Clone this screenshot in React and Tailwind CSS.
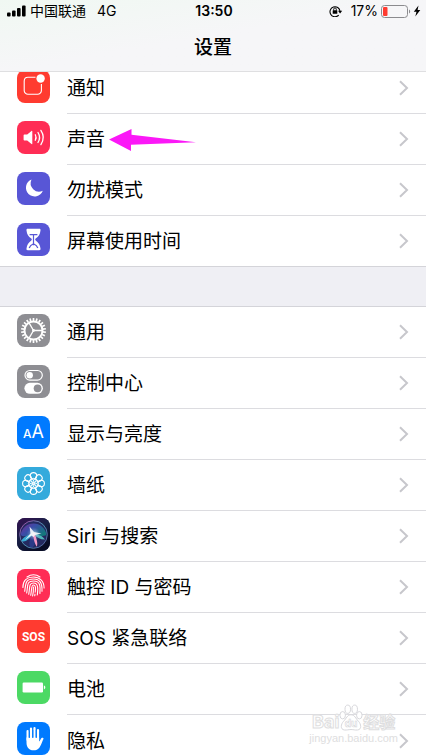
import { clsx } from "clsx";

const PETALS = [0, 45, 90, 135, 180, 225, 270, 315];
const TEETH = Array.from({ length: 22 }, (_, i) => (i * 360) / 22);

function NotificationIcon() {
  return (
    <svg viewBox="0 0 33 33" className="size-full">
      <path
        d="M18.5 7.300H11A3.800 3.800 0 0 0 7.200 11v9.500a3.800 3.800 0 0 0 3.800 3.800h9.600a3.800 3.800 0 0 0 3.800-3.800V14"
        fill="none"
        stroke="#fff"
        strokeWidth="1.1"
      />
      <circle cx="23.6" cy="8.5" r="4.2" fill="#fff" />
    </svg>
  );
}

function SoundIcon() {
  return (
    <svg viewBox="0 0 33 33" className="size-full">
      <path d="M6.600 14.200c0-.5.3-.8.8-.8h2.800l4.300-3.500c.4-.3.8-.1.800.4v12.400c0 .5-.4.7-.8.4l-4.300-3.500H7.400c-.5 0-.8-.3-.8-.8z" fill="#fff" />
      <g fill="none" stroke="#fff" strokeWidth="1.3" strokeLinecap="round">
        <path d="M18.300 13.700c1 1.800 1 3.800 0 5.600" />
        <path d="M21 11.500c2 3.200 2 6.800 0 10" />
        <path d="M23.900 9.400c3 4.500 3 9.700 0 14.200" />
      </g>
    </svg>
  );
}

function MoonIcon() {
  return (
    <svg viewBox="0 0 33 33" className="size-full">
      <path d="M14.500 7.600A8.700 8.700 0 1 0 25.800 18.700 8.400 8.400 0 0 1 14.500 7.600z" fill="#fff" />
    </svg>
  );
}

function HourglassIcon() {
  return (
    <svg viewBox="0 0 33 33" className="size-full">
      <path
        d="M10.700 5.800h11.600c1 0 1.400.7 1.200 1.600-.5 4.100-1.800 6-4.800 8.200-.7.5-.7 1.300 0 1.800 3 2.200 4.300 4.100 4.800 8.200.2.9-.2 1.600-1.200 1.600H10.700c-1 0-1.400-.7-1.200-1.600.5-4.100 1.800-6 4.800-8.200.7-.5.7-1.300 0-1.800-3-2.200-4.300-4.100-4.800-8.200-.2-.9.2-1.600 1.200-1.600z"
        fill="#fff"
      />
      <path
        d="M12.600 11.600h7.800M16.500 11.600v10.600M12.200 25c.6-2.100 2-3.200 4.300-4.200 2.300 1 3.700 2.100 4.300 4.200"
        fill="none"
        stroke="#5856d6"
        strokeWidth="1.200"
      />
    </svg>
  );
}

function GearIcon() {
  return (
    <svg viewBox="0 0 33 33" className="size-full" fill="none" stroke="#fff">
      {TEETH.map((deg) => (
        <path key={deg} d="M16.500 4v3" strokeWidth="1.700" transform={`rotate(${deg} 16.5 16.5)`} />
      ))}
      <circle cx="16.5" cy="16.5" r="9" strokeWidth="1.900" />
      <path d="M16.500 16.500H25M16.500 16.500l-4.300-7.400M16.500 16.500l-4.300 7.400" strokeWidth="1.300" />
      <circle cx="16.5" cy="16.5" r="1.400" fill="#fff" stroke="none" />
    </svg>
  );
}

function ControlIcon() {
  return (
    <svg viewBox="0 0 33 33" className="size-full">
      <rect x="8" y="5.500" width="17.300" height="9.600" rx="4.800" fill="none" stroke="#fff" strokeWidth="1.200" />
      <circle cx="12.700" cy="10.300" r="3.200" fill="#fff" />
      <rect x="7.400" y="17.800" width="18.500" height="11" rx="5.500" fill="#fff" />
      <circle cx="20.600" cy="23.300" r="3.900" fill="#8e8e93" />
    </svg>
  );
}

function DisplayIcon() {
  return (
    <span className="flex size-full items-baseline justify-center pt-1 text-white">
      <span className="text-xs leading-6 font-medium">A</span>
      <span className="text-lg leading-6">A</span>
    </span>
  );
}

function WallpaperIcon() {
  return (
    <svg viewBox="0 0 33 33" className="size-full" fill="none" stroke="#fff" strokeWidth="1.100">
      {PETALS.map((deg) => (
        <g key={deg} transform={`rotate(${deg} 16.5 16.5)`}>
          <circle cx="16.5" cy="8.800" r="3.200" />
          <circle cx="16.5" cy="13.600" r="2.300" strokeWidth=".7" />
        </g>
      ))}
    </svg>
  );
}

function SiriIcon() {
  return (
    <svg viewBox="0 0 33 33" className="size-full">
      <defs>
        <linearGradient id="siriBack" x1="0" y1="0" x2=".6" y2="1">
          <stop offset="0" stopColor="#34104f" />
          <stop offset=".5" stopColor="#192047" />
          <stop offset="1" stopColor="#080c24" />
        </linearGradient>
        <radialGradient id="siriGlow">
          <stop offset="0" stopColor="#fff" />
          <stop offset=".35" stopColor="#c5dcf5" stopOpacity=".8" />
          <stop offset="1" stopColor="#7e82d5" stopOpacity="0" />
        </radialGradient>
        <linearGradient id="siriRing" x1="0" y1="0" x2="1" y2="1">
          <stop offset="0" stopColor="#c044a8" />
          <stop offset=".5" stopColor="#4f9dbb" />
          <stop offset="1" stopColor="#5b5fa0" />
        </linearGradient>
        <linearGradient id="siriOrb" x1="0" y1="0" x2="1" y2=".6">
          <stop offset="0" stopColor="#8a2a92" />
          <stop offset=".45" stopColor="#3d4fb0" />
          <stop offset="1" stopColor="#12807f" />
        </linearGradient>
      </defs>
      <rect width="33" height="33" fill="url(#siriBack)" />
      <circle cx="16.5" cy="16.5" r="13.800" fill="#242a60" stroke="url(#siriRing)" strokeWidth=".9" />
      <path d="M3.600 17A13 13 0 0 1 29.400 17c-4 2-8 1-13-1-5 1-9 4-12.800 1z" fill="url(#siriOrb)" opacity=".9" />
      <path d="M16 16C11 16 5 20 4.500 23c3 2 8-2 11.500-7z" fill="#3bb8de" opacity=".9" />
      <path d="M16 16c-4 5-4 10-3 13 5 2 6-5 4-13z" fill="#2c3e91" opacity=".8" />
      <path d="M16.500 15.500c4 1 9 2 11.500 6-5 0-8.500-2-11.500-6z" fill="#5dd9d0" opacity=".8" />
      <circle cx="16.5" cy="16" r="7" fill="url(#siriGlow)" opacity=".6" />
      <path d="M15.800 15c1 5 1 9 4 13.800 1.500-4-.5-9-2.500-13.800z" fill="#f59ac6" />
      <path d="M12.500 8.500l4.500 5.500 7.500 1.500-6.500 1.500-1.500 2-2-1.500-6.500 4.500 5.500-6.500z" fill="#fff" opacity=".85" />
    </svg>
  );
}

function TouchIdIcon() {
  return (
    <svg viewBox="0 0 33 33" className="size-full" fill="none" stroke="#fff" strokeWidth="1.100" strokeLinecap="round">
      <path d="M10 8c4-2.800 9-2.800 13 0" />
      <path d="M5.900 18.500c0-7.500 4.600-10.500 10.600-10.500s10.600 4 10.600 11" />
      <path d="M7.700 22.300c1.200-8.500.8-12.300 8.800-12.300 6.700 0 8.800 4.300 8.500 12.300" />
      <path d="M9.700 24c1.400-8-.2-12 6.800-12s6.900 5.300 6.400 12.400" />
      <path d="M11.700 25.300c1.400-7.300 0-11.300 4.800-11.300 5 0 4.600 6 3.800 12" />
      <path d="M13.700 26.300c1.200-5.800.4-10.300 2.800-10.300s2.200 3.200 1.700 7.200" />
      <path d="M16.400 18c.1 3-.2 6.300-.8 9M18 25l-.3 1.800" />
    </svg>
  );
}

function SosIcon() {
  return (
    <span className="flex size-full items-center justify-center font-['Roboto',sans-serif] text-xs font-bold text-white">
      SOS
    </span>
  );
}

function BatteryIcon() {
  return (
    <svg viewBox="0 0 33 33" className="size-full" fill="#fff">
      <rect x="5.600" y="11.500" width="20.400" height="10" rx="1.200" />
      <path d="M26.900 14.600c1.900.4 1.900 3.400 0 3.800z" />
    </svg>
  );
}

function HandIcon() {
  return (
    <svg viewBox="0 0 33 33" className="size-full">
      <g fill="none" stroke="#fff" strokeLinecap="round" strokeWidth="2.200">
        <path d="M10.600 18V9.200M14 17V6.500M17.500 17V6M21 18V8" />
      </g>
      <path
        d="M9.500 15.500h12.600v4c1-.8 1.600-2.600 2.400-3.400.8-.7 2.100-.4 2 .6-1.200 2.500-2.100 5.800-4 8.700-1.400 2.100-3.500 2.900-6 2.900-4.700 0-7-3.300-7-7.800z"
        fill="#fff"
      />
      <path d="M12.300 9v7M15.750 8v8M19.250 8v8" stroke="#007aff" strokeWidth=".9" />
    </svg>
  );
}

const GROUPS = [
  [
    { label: "通知", color: "bg-[#ff3b30]", icon: NotificationIcon },
    { label: "声音", color: "bg-[#ff2d55]", icon: SoundIcon, pointed: true },
    { label: "勿扰模式", color: "bg-[#5856d6]", icon: MoonIcon },
    { label: "屏幕使用时间", color: "bg-[#5856d6]", icon: HourglassIcon },
  ],
  [
    { label: "通用", color: "bg-[#8e8e93]", icon: GearIcon },
    { label: "控制中心", color: "bg-[#8e8e93]", icon: ControlIcon },
    { label: "显示与亮度", color: "bg-[#007aff]", icon: DisplayIcon },
    { label: "墙纸", color: "bg-[#34aadc]", icon: WallpaperIcon },
    { label: "Siri 与搜索", color: "bg-[#192047]", icon: SiriIcon },
    { label: "触控 ID 与密码", color: "bg-[#ff2d55]", icon: TouchIdIcon },
    { label: "SOS 紧急联络", color: "bg-[#ff3b30]", icon: SosIcon },
    { label: "电池", color: "bg-[#4cd964]", icon: BatteryIcon },
    { label: "隐私", color: "bg-[#007aff]", icon: HandIcon },
  ],
];

function StatusBar() {
  return (
    <div className="grid h-[22px] grid-cols-[1fr_auto_1fr] items-center pr-[5px] pl-[7px] text-sm">
      <div className="flex items-center">
        <svg viewBox="0 0 19 12" className="mr-1 h-3 w-[19px]">
          <rect x="0" y="7.500" width="3.600" height="4" rx="1" />
          <rect x="5" y="5.500" width="3.600" height="6" rx="1" />
          <rect x="10" y="3" width="3.600" height="8.500" rx="1" />
          <rect x="15" y=".5" width="3.600" height="11" rx="1" />
        </svg>
        <span>中国联通</span>
        <span className="ml-[11px]">4G</span>
      </div>
      <span className="font-semibold">13:50</span>
      <div className="flex items-center justify-end">
        <svg viewBox="0 0 14 12" className="mr-2 h-3 w-3.5" fill="none" stroke="#000">
          <path d="M9.700 10.100A5 5 0 1 1 11 6.300" strokeWidth="1.100" />
          <path d="M9 5.700h4.200l-2.100 2.800z" fill="#000" stroke="none" />
          <rect x="3.700" y="5.300" width="4.600" height="3.500" rx=".4" fill="#000" stroke="none" />
          <path d="M4.700 5.500V4.200a1.300 1.300 0 0 1 2.600 0v1.300" strokeWidth=".9" />
        </svg>
        <span>17%</span>
        <svg viewBox="0 0 30 13" className="ml-[3px] h-[13px] w-[30px]">
          <rect x=".5" y=".5" width="26" height="12" rx="3" fill="none" stroke="#8b8b8e" />
          <rect x="2" y="2" width="4.500" height="9" rx="1" fill="#ff3b30" />
          <path d="M28 4.500c1.600.6 1.600 3.400 0 4z" fill="#8b8b8e" />
        </svg>
        <svg viewBox="0 0 8 12" className="ml-0.5 h-3 w-2">
          <path d="M5.500.5L.8 6.700h2.700L2.300 11.500l5-6.400H4.600z" />
        </svg>
      </div>
    </div>
  );
}

function Chevron() {
  return (
    <svg viewBox="0 0 10 16" className="ml-auto h-4 w-2.5" fill="none" stroke="#c7c7cc" strokeWidth="2">
      <path d="M1 1.200L8 8l-7 6.800" />
    </svg>
  );
}

function SettingsRow({ item, last }) {
  const Icon = item.icon;
  return (
    <li>
      <a href="#" className="flex h-[51px] pl-[17px]">
        <span className="mt-[7px] mr-[17px] size-[33px] shrink-0 overflow-hidden rounded-lg">
          <span className={clsx("block size-full", item.color)}>
            <Icon />
          </span>
        </span>
        <span className={clsx("flex flex-1 items-center pr-[17px]", !last && "border-b border-[#dcdce0]")}>
          <span className="pt-0.5 text-[19px] leading-6">{item.label}</span>
          {item.pointed && (
            <svg viewBox="0 0 88 24" className="ml-1 h-6 w-[88px]">
              <path d="M0 12.500L22.500 2v5.700L87 15.200l-65 2.500V24z" fill="#fb18f7" />
            </svg>
          )}
          <Chevron />
        </span>
      </a>
    </li>
  );
}

function Watermark() {
  return (
    <div className="pointer-events-none absolute right-7 bottom-3 text-white">
      <div className="flex items-end justify-center [-webkit-text-stroke:1px_#dedee0]">
        <span className="text-lg leading-5 font-bold">Bai</span>
        <svg viewBox="0 0 26 30" className="h-7 w-6" fill="#fff" stroke="#d4d4d8">
          <ellipse cx="4" cy="12" rx="3" ry="4" />
          <ellipse cx="9.500" cy="5.500" rx="3" ry="4.500" />
          <ellipse cx="17" cy="5.500" rx="3" ry="4.500" />
          <ellipse cx="22" cy="12" rx="3" ry="4" />
          <path d="M13 11.500c4 0 5 4 8 7s4 9-1 9.500c-3 .3-4-.5-7-.5s-4 .8-7 .5c-5-.5-4-6.500-1-9.500s4-7 8-7z" />
          <text x="13" y="25" textAnchor="middle" fontSize="11" fontWeight="700" strokeWidth=".6">
            du
          </text>
        </svg>
        <span className="text-base leading-5 font-bold">经验</span>
      </div>
      <div className="text-center font-['Liberation_Sans',sans-serif] text-[11px] leading-3 text-[#dedee0]">
        jingyan.baidu.com
      </div>
    </div>
  );
}

export default function App() {
  return (
    <div className="relative flex h-screen flex-col overflow-hidden bg-[#efeff4] font-['Inter','Noto_Sans_CJK_SC',sans-serif] text-black">
      <header className="z-10 shrink-0 border-b border-[#dfdfe1] bg-linear-to-br from-[#f0f8f2] via-[#f6f6f8] to-[#f6f6f8]">
        <StatusBar />
        <h1 className="pt-3.5 pb-[11px] text-center text-[19px] leading-6 font-medium">设置</h1>
      </header>
      <main className="-mt-[9px] flex min-h-0 flex-1 flex-col gap-[39px] overflow-hidden">
        {GROUPS.map((group, g) => (
          <ul
            key={g}
            className={clsx(
              "shrink-0 border-[#d4d4d9] bg-white",
              g === 0 ? "border-b [&>li:last-child>a]:h-[50px]" : "border-t"
            )}
          >
            {group.map((item, i) => (
              <SettingsRow key={item.label} item={item} last={i === group.length - 1} />
            ))}
          </ul>
        ))}
      </main>
      <Watermark />
    </div>
  );
}
